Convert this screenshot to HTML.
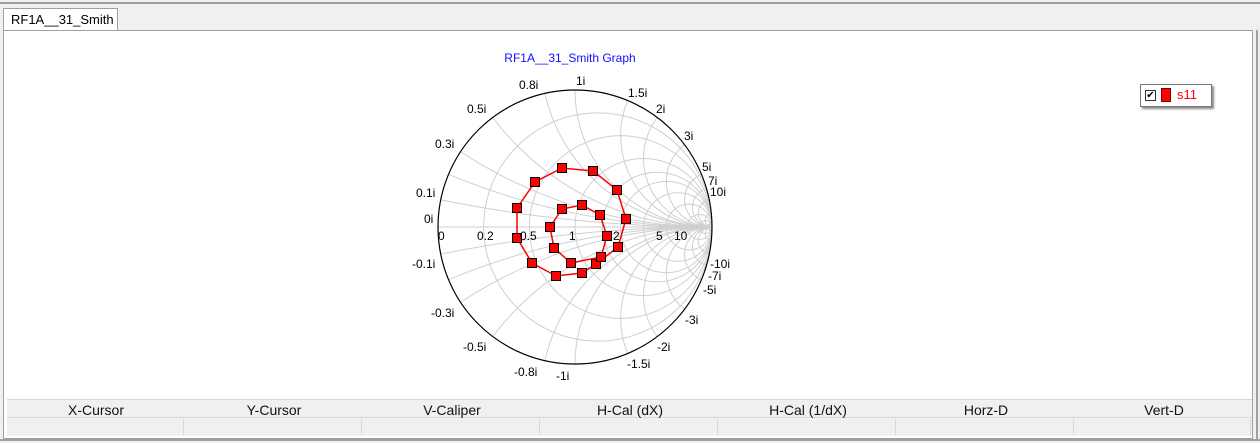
<!DOCTYPE html>
<html><head><meta charset="utf-8"><style>
html,body{margin:0;width:1260px;height:443px;overflow:hidden}
body{background:#f0f0f0;font-family:"Liberation Sans",sans-serif;position:relative}
.abs{position:absolute}
#top{left:0;top:2px;width:1260px;height:2px;background:#a0a0a0}
#tab{left:3px;top:8px;width:115px;height:22px;background:#fff;border:1px solid #a0a0a0;border-bottom:none;font-size:13px;line-height:21px;padding-left:7px;box-sizing:border-box;z-index:2}
#panel{left:3px;top:30px;width:1250px;height:409px;background:#fff;border:1px solid #a0a0a0;box-sizing:border-box}
#rb{left:1256px;top:30px;width:2px;height:410px;background:#a0a0a0}
#bb{left:0;top:439px;width:1260px;height:2px;background:#a0a0a0}
#tbl{left:7px;top:399px;width:1245px;height:37px;background:#f0f0f0;border-top:1px solid #d8d8d8;box-sizing:border-box}
.h{position:absolute;top:2px;width:178px;text-align:center;font-size:14px;color:#111}
.sep{position:absolute;top:19px;height:16px;width:1px;background:#d8d8d8}
#rowl{position:absolute;left:0;top:17px;width:1245px;height:1px;background:#d8d8d8}
svg text{font-family:"Liberation Sans",sans-serif;font-size:12px;fill:#000}
#leg{left:1140px;top:84px;width:70px;height:21px;background:#fff;border:1px solid #777;box-shadow:2px 2px 2px #888}
</style></head><body>
<div class="abs" id="top"></div>
<div class="abs" id="panel"></div>
<div class="abs" id="tab">RF1A__31_Smith</div>
<div class="abs" id="rb"></div>
<div class="abs" id="bb"></div>
<svg class="abs" style="left:0;top:0" width="1260" height="440" id="sv">
<defs><clipPath id="cp"><circle cx="575" cy="227" r="137"/></clipPath></defs>
<g id="grid" clip-path="url(#cp)" fill="none" stroke="#cfcfcf" stroke-width="1"></g>
<line x1="438" y1="227" x2="712" y2="227" stroke="#cfcfcf"/>
<circle cx="575" cy="227" r="137" fill="none" stroke="#000" stroke-width="1.2"/>
<polyline fill="none" stroke="#ff0000" stroke-width="1.5" points="517,208 535,182 562,168 593,171 617,190 626,219 618,247 596,264 582,273 556,276 532,263 517,238 517,208"/>
<polyline fill="none" stroke="#ff0000" stroke-width="1.5" points="562,209 582,205 600,215 607,236 601,257 571,263 554,248 550,227 562,209"/>
<g id="pts" fill="#ff0000" stroke="#000" stroke-width="1"></g>
<text x="570" y="62" text-anchor="middle" style="fill:#1010ff">RF1A__31_Smith Graph</text>
<text x="438" y="240">0</text><text x="477" y="240">0.2</text><text x="520" y="240">0.5</text><text x="569" y="240">1</text><text x="613" y="240">2</text><text x="656" y="240">5</text><text x="674" y="240">10</text>
<text x="576" y="85">1i</text><text x="519" y="89">0.8i</text><text x="628" y="97">1.5i</text><text x="467" y="113">0.5i</text><text x="656" y="113">2i</text><text x="435" y="148">0.3i</text><text x="684" y="140">3i</text><text x="702" y="171">5i</text><text x="708" y="185">7i</text><text x="710" y="196">10i</text><text x="416" y="197">0.1i</text><text x="424" y="223">0i</text>
<text x="412" y="268">-0.1i</text><text x="710" y="268">-10i</text><text x="708" y="280">-7i</text><text x="703" y="294">-5i</text><text x="431" y="317">-0.3i</text><text x="685" y="324">-3i</text><text x="463" y="351">-0.5i</text><text x="657" y="351">-2i</text><text x="627" y="368">-1.5i</text><text x="514" y="376">-0.8i</text><text x="556" y="380">-1i</text>
</svg>
<div class="abs" id="leg"><div class="abs" style="left:4px;top:5px;width:9px;height:9px;border:1px solid #333;background:#fff;font-size:10px;line-height:9px;text-align:center">✔</div><div class="abs" style="left:20px;top:3px;width:8px;height:12px;background:#f00;border:1px solid #700"></div><div class="abs" style="left:36px;top:2px;font-size:13px;color:#f00">s11</div></div>
<div class="abs" id="tbl">
<div id="rowl"></div>
<div class="h" style="left:0">X-Cursor</div><div class="h" style="left:178px">Y-Cursor</div><div class="h" style="left:356px">V-Caliper</div><div class="h" style="left:534px">H-Cal (dX)</div><div class="h" style="left:712px">H-Cal (1/dX)</div><div class="h" style="left:890px">Horz-D</div><div class="h" style="left:1068px">Vert-D</div>
<div class="sep" style="left:176px"></div><div class="sep" style="left:354px"></div><div class="sep" style="left:532px"></div><div class="sep" style="left:710px"></div><div class="sep" style="left:888px"></div><div class="sep" style="left:1066px"></div><div class="sep" style="left:1243px"></div>
</div>
<script>
var ns="http://www.w3.org/2000/svg",g=document.getElementById("grid"),cx=575,cy=227,R=137;
function c(x,y,r,p){var e=document.createElementNS(ns,"circle");e.setAttribute("cx",x);e.setAttribute("cy",y);e.setAttribute("r",r);p.appendChild(e);return e;}
[0.2,0.5,1,1.5,2,3,5,10,20,50].forEach(function(r){c(cx+R*r/(1+r),cy,R/(1+r),g);});
[0.1,0.2,0.3,0.5,0.8,1,1.5,2,3,5,7,10,20,50].forEach(function(x){c(cx+R,cy-R/x,R/x,g);c(cx+R,cy+R/x,R/x,g);});
var p=document.getElementById("pts");
[[517,208],[535,182],[562,168],[593,171],[617,190],[626,219],[618,247],[596,264],[582,273],[556,276],[532,263],[517,238],[562,209],[582,205],[600,215],[607,236],[601,257],[571,263],[554,248],[550,227]].forEach(function(q){var e=document.createElementNS(ns,"rect");e.setAttribute("x",q[0]-4.5);e.setAttribute("y",q[1]-4.5);e.setAttribute("width",9);e.setAttribute("height",9);p.appendChild(e);});
</script>
</body></html>
